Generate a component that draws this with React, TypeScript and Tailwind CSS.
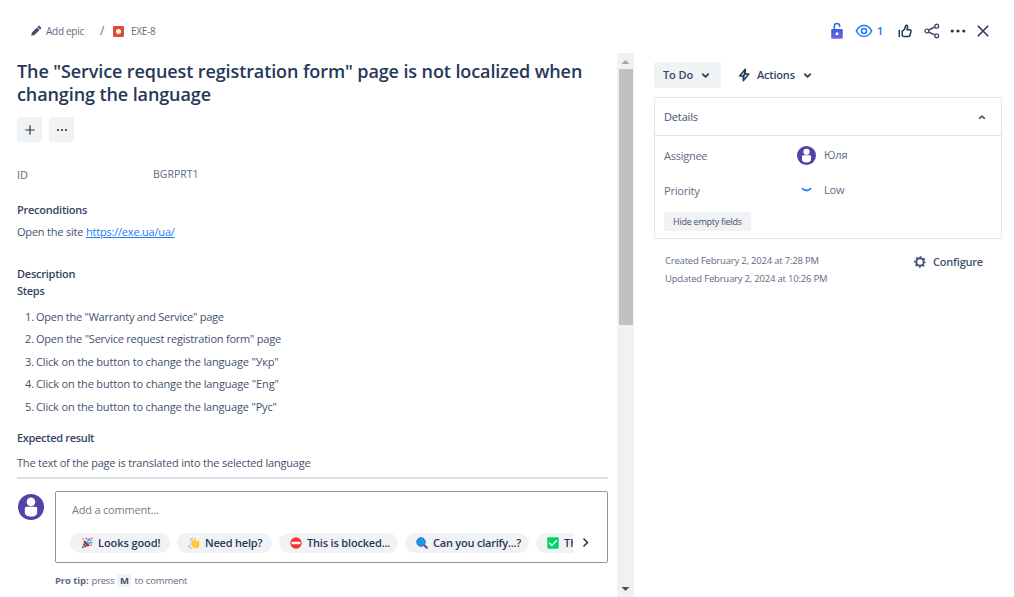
import React from "react";

const steps: { text: string; cls: string }[] = [
  { text: 'Open the "Warranty and Service" page', cls: "tracking-[-0.25px]" },
  { text: 'Open the "Service request registration form" page', cls: "tracking-[-0.23px]" },
  { text: 'Click on the button to change the language "Укр"', cls: "tracking-[-0.16px]" },
  { text: 'Click on the button to change the language "Eng"', cls: "tracking-[-0.15px]" },
  { text: 'Click on the button to change the language "Рус"', cls: "tracking-[-0.16px]" },
];

function Avatar({ className }: { className: string }) {
  return (
    <svg viewBox="0 0 26 26" className={className}>
      <circle cx="13" cy="13" r="13" fill="#5243aa" />
      <circle cx="13" cy="7.9" r="4.3" fill="#fff" />
      <path d="M6.8 14.2a1.6 1.6 0 0 1 1.6-1.5h9.2a1.6 1.6 0 0 1 1.6 1.5v4.3c0 2.4-2.6 4.2-6.2 4.2s-6.2-1.8-6.2-4.2z" fill="#fff" />
    </svg>
  );
}

function Chevron({ className, d = "M2 3.6l3 3 3-3" }: { className: string; d?: string }) {
  return (
    <svg viewBox="0 0 10 10" className={className} fill="none" stroke="currentColor" strokeLinecap="round" strokeLinejoin="round">
      <path d={d} />
    </svg>
  );
}

function Party() {
  return (
    <svg viewBox="0 0 12 12" className="h-3 w-3 shrink-0">
      <path d="M3.4 3.2L9 8.6 1 11.4z" fill="#e8a33d" />
      <path d="M3.4 3.2L9 8.6 6.6 9.4 2.6 5.4z" fill="#7a3b4c" />
      <path d="M2.1 7l3.1 3M1.2 9.6l1 1.2" stroke="#5b4a8a" strokeWidth="1.1" />
      <path d="M6 4.8c1.6-.2 1-2.4 3-3.4M7.2 6.6c1.4-1.6 2.6-.6 4-1.2" stroke="#00a6ed" strokeWidth="1.2" fill="none" />
      <path d="M5 .8l1 1.8M8.8 3.6l1.6-.8" stroke="#f92f60" strokeWidth="1.2" />
      <path d="M1.6 1.4h1.3v1.2H1.6zM9.6 7.4h1.4v1.2H9.6zM10.4.8h1.2V2h-1.2z" fill="#f70a8d" />
    </svg>
  );
}

function Wave() {
  return (
    <svg viewBox="0 0 12 12" className="h-3 w-3 shrink-0">
      <path d="M4 3.2c.5-.6 1.2-.3 1.5.2l.7 1-.3-2.6c0-.8 1.1-1 1.4-.2L8.5 5l1-.9c.3-1.2 1.7-1 1.7.1l.2 3.6c0 2.3-1.3 3.7-3.5 3.7-1.7 0-2.6-.7-3.5-1.9L2.6 7.400c-.4-.7.4-1.4 1-.9L3.2 5.400c-.2-.7.5-1.200 1-.8z" fill="#ffc83d" />
      <path d="M.8 8.300c.2 1.300 1 2.300 2.300 2.700M2.400 3.800c.2-1.300.9-2.100 1.900-2.500" fill="none" stroke="#a9c8ff" strokeWidth="1.500" strokeLinecap="round" />
    </svg>
  );
}

function Blocked() {
  return (
    <svg viewBox="0 0 12 12" className="h-3 w-3 shrink-0">
      <circle cx="6" cy="6" r="5.700" fill="#f8312f" />
      <rect x="1.600" y="4.700" width="8.800" height="2.500" rx=".6" fill="#fff" />
    </svg>
  );
}

function Magnifier() {
  return (
    <svg viewBox="0 0 12 12" className="h-3 w-3 shrink-0">
      <path d="M7.800 7.800l3 3" stroke="#6d4a9c" strokeWidth="2.200" strokeLinecap="round" />
      <circle cx="5" cy="5" r="4.200" fill="#00a6ed" stroke="#5a57a6" strokeWidth="1" />
    </svg>
  );
}

function Check() {
  return (
    <svg viewBox="0 0 12 12" className="h-3 w-3 shrink-0">
      <rect x=".3" y=".3" width="11.400" height="11.400" rx="1" fill="#00d26a" />
      <path d="M2.700 6.300l2.200 2.200 4.500-4.800" fill="none" stroke="#fff" strokeWidth="1.300" strokeLinecap="round" strokeLinejoin="round" />
    </svg>
  );
}

function Chip({ icon, label, className }: { icon: React.ReactNode; label: string; className: string }) {
  return (
    <div className={`flex h-5 shrink-0 items-center gap-[5px] rounded-full bg-[#f1f2f4] pl-[11px] text-[11px] font-semibold text-[#253858] ${className}`}>
      {icon}
      <span className="whitespace-nowrap">{label}</span>
    </div>
  );
}

function IssueColumn() {
  return (
    <main className="flex h-full w-[634px] shrink-0 flex-col">
      <nav className="flex h-[53px] shrink-0 items-center pb-2 pl-[30px] pt-[17px] text-[10px] text-[#5e6c84]">
        <svg viewBox="0 0 12 12" className="h-3 w-3 text-[#42526e]" fill="currentColor">
          <path d="M1.200 10.800l.7-3.300 5.100-5.100 2.600 2.600-5.100 5.100zM7.500 1.900l.8-.8c.4-.4 1-.4 1.400 0l1.200 1.200c.4.4.4 1 0 1.400l-.8.8z" />
        </svg>
        <span className="ml-[4px] w-[54px] whitespace-nowrap tracking-[-0.28px]">Add epic</span>
        <span className="w-[13px] text-[12px]">/</span>
        <svg viewBox="0 0 11 11" className="h-[11px] w-[11px]">
          <rect width="11" height="11" rx="1.300" fill="#e5493a" />
          <circle cx="5.500" cy="5.500" r="2.500" fill="#fff" />
        </svg>
        <span className="ml-[7px] whitespace-nowrap tracking-[-0.3px]">EXE-8</span>
      </nav>
      <div className="flex min-h-0 flex-1">
        <section className="flex w-[617px] shrink-0 flex-col pl-[17px] pr-[9px] pt-[7px] text-[11px] text-[#42526e]">
          <h1 className="whitespace-nowrap text-[18px] font-semibold leading-[23px] tracking-[-0.1px] text-[#253858]">
            The "Service request registration form" page is not localized when
            <br />
            changing the language
          </h1>
          <div className="mt-[11px] flex gap-[7px] text-[#253858]">
            <button className="flex h-[25px] w-[25px] items-center justify-center rounded-[2px] bg-[#f1f2f4]">
              <svg viewBox="0 0 10 10" className="h-[10px] w-[10px]" stroke="currentColor" strokeWidth="1.200">
                <path d="M5 .3v9.400M.3 5h9.400" />
              </svg>
            </button>
            <button className="flex h-[25px] w-[25px] items-center justify-center rounded-[2px] bg-[#f1f2f4]">
              <svg viewBox="0 0 12 4" className="h-1 w-3" fill="currentColor">
                <circle cx="2" cy="2" r="1.100" />
                <circle cx="6" cy="2" r="1.100" />
                <circle cx="10" cy="2" r="1.100" />
              </svg>
            </button>
          </div>
          <div className="mt-[24px] flex h-[18px] items-center text-[#5e6c84]">
            <span className="w-[136px]">ID</span>
            <span className="text-[10.5px]">BGRPRT1</span>
          </div>
          <h2 className="mt-[17px] h-[18px] font-semibold leading-[18px] tracking-[-0.25px] text-[#344563]">Preconditions</h2>
          <p className="mt-1 h-[18px] leading-[18px] tracking-[-0.2px]">
            Open the site <a className="text-[#1d7afc] underline">https://exe.ua/ua/</a>
          </p>
          <h2 className="mt-[24px] h-[18px] font-semibold leading-[18px] tracking-[-0.25px] text-[#344563]">Description</h2>
          <h3 className="-mt-px h-[18px] font-semibold leading-[18px] tracking-[-0.3px] text-[#344563]">Steps</h3>
          <ol className="mt-[6px]">
            {steps.map((s, i) => (
              <li key={i} className="flex h-[22.4px] items-center">
                <span className="w-[19px] pl-[8px]">{i + 1}.</span>
                <span className={`whitespace-nowrap ${s.cls}`}>{s.text}</span>
              </li>
            ))}
          </ol>
          <h2 className="mt-[11px] h-[18px] font-semibold leading-[18px] tracking-[-0.33px] text-[#344563]">Expected result</h2>
          <p className="mt-[7px] h-[18px] leading-[18px] tracking-[-0.2px]">The text of the page is translated into the selected language</p>
          <div className="mt-[5px] h-[2px] shrink-0 bg-[#dcdfe4]" />
          <div className="mt-[12px] flex shrink-0">
            <Avatar className="ml-[1px] mt-[3px] h-[26px] w-[26px]" />
            <div className="ml-[11px] h-[72px] w-[553px] rounded-[2px] border border-[#8c94ae] pt-[9px]">
              <p className="pl-4 leading-[17px] tracking-[-0.2px] text-[#757d8c]">Add a comment...</p>
              <div className="mt-[15px] flex items-center pl-[14px]">
                <div className="flex w-[503px] gap-[7px] overflow-hidden">
                  <Chip icon={<Party />} label="Looks good!" className="w-[100px] tracking-[-0.08px]" />
                  <Chip icon={<Wave />} label="Need help?" className="w-[95px] tracking-[-0.2px]" />
                  <Chip icon={<Blocked />} label="This is blocked..." className="w-[119px] tracking-[-0.18px]" />
                  <Chip icon={<Magnifier />} label="Can you clarify...?" className="w-[124px] tracking-[-0.22px]" />
                  <Chip icon={<Check />} label="This is on track" className="w-[120px]" />
                </div>
                <Chevron className="ml-[7px] h-[11px] w-[11px] stroke-[1.500] text-[#253858]" d="M3.600 1.800L6.800 5 3.600 8.200" />
              </div>
            </div>
          </div>
          <div className="ml-[38px] mt-[10px] flex h-4 shrink-0 items-center text-[9.5px] tracking-[-0.1px] text-[#5e6c84]">
            <b className="mr-[3px] font-bold">Pro tip:</b>
            <span className="tracking-[-0.25px]">press</span>
            <kbd className="mx-[3px] flex h-[13px] w-[14px] items-center justify-center rounded-[2px] bg-[#f1f2f4] font-sans font-bold text-[#42526e]">M</kbd>
            <span>to comment</span>
          </div>
        </section>
        <div className="flex w-[17px] shrink-0 flex-col items-center bg-[#f1f1f1]">
          <svg viewBox="0 0 17 16" className="h-4 w-[17px] shrink-0"><path d="M4.500 11h8L8.500 7z" fill="#a3a3a3" /></svg>
          <div className="h-[256px] w-[14px] bg-[#c1c1c1]" />
          <svg viewBox="0 0 17 16" className="mt-auto h-4 w-[17px] shrink-0"><path d="M4.500 6h8l-4 4z" fill="#505050" /></svg>
        </div>
      </div>
    </main>
  );
}

function Toolbar() {
  return (
    <div className="flex h-[62px] items-center justify-end pr-6">
      <svg viewBox="0 0 14 18" className="h-[18px] w-[14px]">
        <defs>
          <linearGradient id="lock" x1="0" y1="0" x2="0" y2="1">
            <stop offset="0" stopColor="#2f66e0" />
            <stop offset="1" stopColor="#7a5fd8" />
          </linearGradient>
        </defs>
        <path d="M4.300 7.500V4.300a2.700 2.700 0 0 1 5.400 0v.6" fill="none" stroke="#3b69de" strokeWidth="1.500" />
        <rect x="1.200" y="7" width="11.600" height="9.700" rx="1.300" fill="url(#lock)" />
        <circle cx="7" cy="11.800" r="1.500" fill="#fff" />
      </svg>
      <svg viewBox="0 0 18 14" className="ml-[11px] h-[14px] w-[18px]" fill="none" stroke="#1d7afc" strokeWidth="1.500">
        <path d="M1.300 7C3.200 3.300 6 1.600 9 1.600S14.800 3.300 16.700 7C14.800 10.700 12 12.400 9 12.400S3.200 10.700 1.300 7z" />
        <circle cx="9" cy="7" r="2.500" />
      </svg>
      <span className="ml-[2px] w-[10px] text-center text-[11.5px] font-semibold text-[#1d7afc]">1</span>
      <svg viewBox="0 0 14 14" className="ml-[13px] h-[14px] w-[14px]" fill="none" stroke="#253858" strokeWidth="1.500" strokeLinejoin="round" strokeLinecap="round">
        <path d="M1.300 6.500v6M4.200 7.200c2-.8 3-2.700 3.400-5.300.1-1 1.900-.9 2 .6.1 1-.2 2.200-.6 3.200h2.700c1 0 1.500.8 1.300 1.600l-1 3.900c-.2.8-.8 1.300-1.600 1.300H5.600c-.8 0-1.400-.6-1.400-1.400z" />
      </svg>
      <svg viewBox="0 0 16 16" className="ml-[12px] h-4 w-4" fill="none" stroke="#42526e" strokeWidth="1.400">
        <path d="M4.600 7l6.200-3M4.600 9l6.200 3" />
        <circle cx="2.900" cy="8" r="1.900" />
        <circle cx="12.700" cy="3.200" r="1.900" />
        <circle cx="12.700" cy="12.800" r="1.900" />
      </svg>
      <svg viewBox="0 0 16 4" className="ml-[10px] h-1 w-4" fill="#253858">
        <circle cx="2.200" cy="2" r="1.600" />
        <circle cx="8" cy="2" r="1.600" />
        <circle cx="13.800" cy="2" r="1.600" />
      </svg>
      <svg viewBox="0 0 14 14" className="ml-[10px] h-[14px] w-[14px]" stroke="#253858" strokeWidth="1.600">
        <path d="M1.800 1.800l10.400 10.400M12.200 1.800L1.800 12.200" />
      </svg>
    </div>
  );
}

function DetailsColumn() {
  return (
    <aside className="ml-5 flex w-[348px] flex-col text-[11px] text-[#5e6c84]">
      <div className="-mr-3"><Toolbar /></div>
      <div className="flex h-[26px] items-center font-semibold text-[#344563]">
        <button className="flex h-[26px] w-[67px] items-center rounded-[2px] bg-[#f1f2f4] pl-[9px]">
          <span className="w-[38px] text-left tracking-[-0.1px]">To Do</span>
          <Chevron className="h-[9px] w-[9px] stroke-2" />
        </button>
        <svg viewBox="0 0 12 14" className="ml-[17px] h-[14px] w-3" stroke="#253858" strokeWidth="1.500" strokeLinejoin="round" fill="none">
          <path d="M7.300 1.300L1.600 8h3.700v4.700L10.800 6H7.300z" />
          <path d="M6.500 3v4.500M5.800 6.500v4" />
        </svg>
        <span className="ml-[7px] w-[46px] tracking-[-0.2px]">Actions</span>
        <Chevron className="h-[9px] w-[9px] stroke-2" />
      </div>
      <div className="mt-[9px] h-[142px] rounded-[3px] border border-[#e4e6ea]">
        <div className="flex h-[38px] items-center justify-between border-b border-[#dcdfe4] pl-[9px] pr-[14px] text-[#42526e]">
          <span className="pt-[2px] tracking-[-0.15px]">Details</span>
          <Chevron className="h-[10px] w-[10px] stroke-[1.600]" d="M2.600 6.300L5 4l2.400 2.300" />
        </div>
        <div className="mt-[9px] flex h-5 items-center pl-[9px]">
          <span className="w-[133px] pt-[2px] tracking-[-0.25px]">Assignee</span>
          <Avatar className="h-[19px] w-[19px]" />
          <span className="ml-[8px] tracking-[-0.2px]">Юля</span>
        </div>
        <div className="mt-[15px] flex h-5 items-center pl-[9px]">
          <span className="w-[137px] pt-[2px] tracking-[-0.2px]">Priority</span>
          <svg viewBox="0 0 11 6" className="h-[6px] w-[11px]" fill="none" stroke="#1d7afc" strokeWidth="1.700" strokeLinecap="round"><path d="M1.400 1.700Q5.500 5.300 9.600 1.700" /></svg>
          <span className="ml-[12px] tracking-[-0.2px]">Low</span>
        </div>
        <button className="ml-[9px] mt-[12px] flex h-[19px] w-[87px] items-center justify-center rounded-[2px] bg-[#f1f2f4] pt-px text-[9.5px] text-[#42526e]">
          <span className="whitespace-nowrap text-[9px] tracking-[-0.26px]">Hide empty fields</span>
        </button>
      </div>
      <div className="mt-[13px] flex justify-between pl-[11px] pr-[19px]">
        <div className="whitespace-nowrap text-[9.5px] leading-[18px] tracking-[-0.2px]">
          <p>Created February 2, 2024 at 7:28 PM</p>
          <p>Updated February 2, 2024 at 10:26 PM</p>
        </div>
        <div className="-mt-px flex h-[22px] items-center gap-[7px] font-semibold tracking-[-0.2px] text-[#42526e]">
          <svg viewBox="0 0 12 12" className="h-3 w-3" fill="none" stroke="#42526e">
            <circle cx="6" cy="6" r="3.700" strokeWidth="1.900" />
            <circle cx="6" cy="6" r="5.100" strokeWidth="1.500" strokeDasharray="2 2.005" strokeDashoffset="1" />
          </svg>
          <span>Configure</span>
        </div>
      </div>
    </aside>
  );
}

export default function App() {
  return (
    <div className="flex h-[597px] w-[1014px] overflow-hidden bg-white font-['Open_Sans','Noto_Sans',sans-serif]">
      <IssueColumn />
      <DetailsColumn />
    </div>
  );
}
